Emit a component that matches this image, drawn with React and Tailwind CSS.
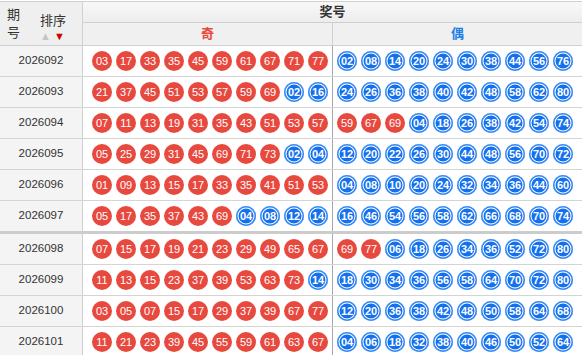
import React from 'react'

const rows = [
  { issue: '2026092', nums: ['03','17','33','35','45','59','61','67','71','77','02','08','14','20','24','30','38','44','56','76'] },
  { issue: '2026093', nums: ['21','37','45','51','53','57','59','69','02','16','24','26','36','38','40','42','48','58','62','80'] },
  { issue: '2026094', nums: ['07','11','13','19','31','35','43','51','53','57','59','67','69','04','18','26','38','42','54','74'] },
  { issue: '2026095', nums: ['05','25','29','31','45','69','71','73','02','04','12','20','22','26','30','44','48','56','70','72'] },
  { issue: '2026096', nums: ['01','09','13','15','17','33','35','41','51','53','04','08','10','20','24','32','34','36','44','60'] },
  { issue: '2026097', nums: ['05','17','35','37','43','69','04','08','12','14','16','46','54','56','58','62','66','68','70','74'] },
  { issue: '2026098', nums: ['07','15','17','19','21','23','29','49','65','67','69','77','06','18','26','34','36','52','72','80'] },
  { issue: '2026099', nums: ['11','13','15','23','37','39','53','63','73','14','18','30','34','36','56','58','64','70','72','80'] },
  { issue: '2026100', nums: ['03','05','07','15','17','29','37','39','67','77','12','20','36','38','42','48','50','58','64','68'] },
  { issue: '2026101', nums: ['11','21','23','39','45','55','59','61','63','67','04','06','18','32','38','40','46','50','52','64'] },
]

const font = { fontFamily: '"Liberation Sans", "Noto Sans CJK SC", sans-serif' }

const Ball = ({ n }) => {
  const odd = parseInt(n, 10) % 2 === 1
  if (odd) {
    return (
      <span className="flex h-[20px] w-[20px] shrink-0 items-center justify-center rounded-full bg-[#e8493f] text-[11px] leading-none text-white">
        {n}
      </span>
    )
  }
  return (
    <span className="flex h-[20px] w-[20px] shrink-0 items-center justify-center rounded-full bg-[#1570ee] text-[11px] font-bold leading-none text-white shadow-[inset_0_0_0_1.5px_#2f86f3,inset_0_0_0_2.5px_#ffffff]">
      {n}
    </span>
  )
}

const Row = ({ row, thick }) => (
  <div className={`flex h-[31px] ${thick ? 'border-b-[3px] h-[33px] border-[#cccccc]' : 'border-b border-[#d4d4d4]'}`}>
    <div className="flex w-[83px] shrink-0 items-center justify-center border-r border-[#d0d0d0] bg-[#f4f4f4] text-[11.5px] text-[#333]">
      {row.issue}
    </div>
    <div className="flex w-[250px] shrink-0 items-center gap-[4px] border-r border-[#a8a8a8] pl-[9px]">
      {row.nums.slice(0, 10).map((n, i) => <Ball key={i} n={n} />)}
    </div>
    <div className="flex flex-1 items-center gap-[4px] pl-[4px]">
      {row.nums.slice(10).map((n, i) => <Ball key={i} n={n} />)}
    </div>
  </div>
)

export default function App() {
  return (
    <div className="w-[582px] h-[355px] overflow-hidden bg-white pt-px" style={font}>
      <div className="border-t border-[#cfcfcf]">
        <div className="flex border-b border-[#d0d0d0]">
          <div className="flex h-[43px] w-[83px] shrink-0 items-center border-r border-[#d0d0d0] bg-[#efefef] pl-[7px] text-[13px] text-[#333]">
            <div className="w-[14px] leading-[18px]">期号</div>
            <div className="ml-[19px] mt-[8px] flex flex-col items-start">
              <span className="leading-[14px]">排序</span>
              <span className="mt-[3px] flex gap-[3px] text-[11px] leading-none">
                <span className="text-[#c4c4c4]">▲</span>
                <span className="text-[#d00000]">▼</span>
              </span>
            </div>
          </div>
          <div className="flex flex-1 flex-col">
            <div className="flex h-[21px] items-center justify-center border-b border-[#d0d0d0] bg-gradient-to-b from-[#f8f8f8] to-[#ededed] text-[13px] font-bold text-[#333]">
              奖号
            </div>
            <div className="flex h-[22px] bg-[#f0f0f0] text-[13px] font-bold">
              <div className="flex w-[250px] items-center justify-center border-r border-[#d0d0d0] text-[#e8493f]">奇</div>
              <div className="flex flex-1 items-center justify-center text-[#1e7fe6]">偶</div>
            </div>
          </div>
        </div>
        {rows.map((row, i) => (
          <Row key={row.issue} row={row} thick={i === 5} />
        ))}
      </div>
    </div>
  )
}
